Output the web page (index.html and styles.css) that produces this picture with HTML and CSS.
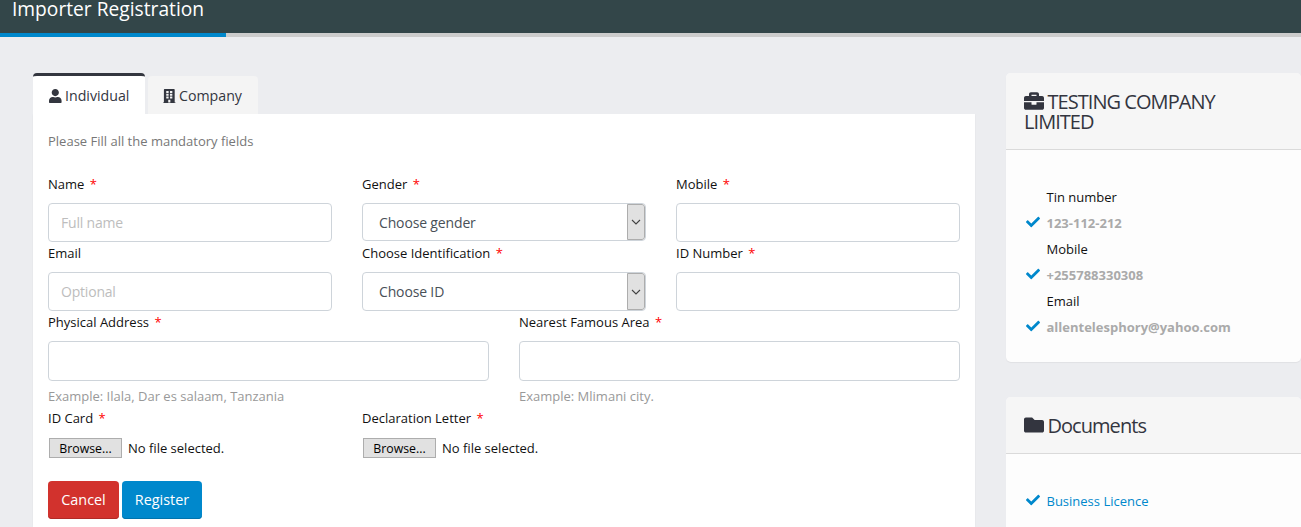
FILE: index.html
```html
<!DOCTYPE html>
<html lang="en">
<head>
<meta charset="utf-8">
<title>Importer Registration</title>
<link rel="stylesheet" href="styles.css">
</head>
<body>
<svg class="defs" width="0" height="0">
  <symbol id="check" viewBox="0 0 512 512"><path d="M173.898 439.404l-166.4-166.4c-9.997-9.997-9.997-26.206 0-36.204l36.203-36.204c9.997-9.998 26.207-9.998 36.204 0L192 312.69 432.095 72.596c9.997-9.997 26.207-9.997 36.204 0l36.203 36.204c9.997 9.997 9.997 26.206 0 36.204l-294.4 294.401c-9.998 9.997-26.207 9.997-36.204-.001z"/></symbol>
  <symbol id="chevron" viewBox="0 0 10 6"><path d="M1 1l4 4 4-4" fill="none" stroke="#444" stroke-width="1.1"/></symbol>
</svg>
<header class="topbar"><h1 class="title">Importer Registration</h1></header>
<div class="progress"><div class="progress-fill"></div></div>
<div class="layout">
  <main class="main">
    <nav class="tabs">
      <a class="tab active"><svg class="tab-icon" viewBox="0 0 448 512"><path d="M224 256c70.7 0 128-57.3 128-128S294.7 0 224 0 96 57.3 96 128s57.3 128 128 128zm89.6 32h-16.7c-22.2 10.2-46.9 16-72.9 16s-50.6-5.8-72.9-16h-16.7C60.2 288 0 348.2 0 422.4V464c0 26.5 21.5 48 48 48h352c26.5 0 48-21.5 48-48v-41.6c0-74.2-60.2-134.4-134.4-134.4z"/></svg><span>Individual</span></a>
      <a class="tab"><svg class="tab-icon" viewBox="0 0 448 512"><path fill-rule="evenodd" d="M436 480h-20V24c0-13.255-10.745-24-24-24H56C42.745 0 32 10.745 32 24v456H12c-6.627 0-12 5.373-12 12v20h448v-20c0-6.627-5.373-12-12-12zM116 70h84v76h-84zM248 70h84v76h-84zM116 172h84v70h-84zM248 172h84v70h-84zM116 268h84v70h-84zM248 268h84v70h-84zM186 384h76v96h-76z"/></svg><span>Company</span></a>
    </nav>
    <form class="panel">
      <p class="intro">Please Fill all the mandatory fields</p>
      <div class="row thirds">
        <div class="field"><label class="label">Name <i class="req">*</i></label><input class="input" placeholder="Full name"></div>
        <div class="field"><label class="label">Gender <i class="req">*</i></label><div class="select short"><span class="value">Choose gender</span><span class="arrow"><svg class="chev"><use href="#chevron"/></svg></span></div></div>
        <div class="field"><label class="label">Mobile <i class="req">*</i></label><input class="input"></div>
      </div>
      <div class="row thirds">
        <div class="field"><label class="label">Email</label><input class="input" placeholder="Optional"></div>
        <div class="field"><label class="label">Choose Identification <i class="req">*</i></label><div class="select"><span class="value">Choose ID</span><span class="arrow"><svg class="chev"><use href="#chevron"/></svg></span></div></div>
        <div class="field"><label class="label">ID Number <i class="req">*</i></label><input class="input"></div>
      </div>
      <div class="row halves">
        <div class="field"><label class="label">Physical Address <i class="req">*</i></label><input class="input tall"><span class="help">Example: Ilala, Dar es salaam, Tanzania</span></div>
        <div class="field"><label class="label">Nearest Famous Area <i class="req">*</i></label><input class="input tall"><span class="help">Example: Mlimani city.</span></div>
      </div>
      <div class="row thirds files">
        <div class="field"><label class="label">ID Card <i class="req">*</i></label><div class="file"><span class="browse">Browse...</span><span>No file selected.</span></div></div>
        <div class="field"><label class="label">Declaration Letter <i class="req">*</i></label><div class="file"><span class="browse">Browse...</span><span>No file selected.</span></div></div>
      </div>
      <div class="actions"><button type="button" class="btn cancel">Cancel</button><button type="button" class="btn register">Register</button></div>
    </form>
  </main>
  <aside class="side">
    <section class="card company">
      <h2 class="card-head"><svg class="head-icon" viewBox="0 0 512 512"><path d="M320 336c0 8.84-7.16 16-16 16h-96c-8.84 0-16-7.16-16-16v-48H0v144c0 25.6 22.4 48 48 48h416c25.6 0 48-22.4 48-48V288H320v48zm144-208h-80V80c0-25.6-22.4-48-48-48H176c-25.6 0-48 22.4-48 48v48H48c-25.6 0-48 22.4-48 48v80h512v-80c0-25.6-22.4-48-48-48zm-144 0H192V96h128v32z"/></svg> TESTING COMPANY LIMITED</h2>
      <ul class="list">
        <li class="item">Tin number</li>
        <li class="item strong"><svg class="tick"><use href="#check"/></svg>123-112-212</li>
        <li class="item">Mobile</li>
        <li class="item strong"><svg class="tick"><use href="#check"/></svg>+255788330308</li>
        <li class="item">Email</li>
        <li class="item strong"><svg class="tick"><use href="#check"/></svg>allentelesphory@yahoo.com</li>
      </ul>
    </section>
    <section class="card documents">
      <h2 class="card-head"><svg class="head-icon" viewBox="0 0 512 512"><path d="M464 128H272l-64-64H48C21.49 64 0 85.49 0 112v288c0 26.51 21.49 48 48 48h416c26.51 0 48-21.49 48-48V176c0-26.51-21.49-48-48-48z"/></svg> Documents</h2>
      <ul class="list docs">
        <li class="item link"><svg class="tick"><use href="#check"/></svg>Business Licence</li>
      </ul>
    </section>
  </aside>
</div>
</body>
</html>
```
FILE: styles.css
```css
* { box-sizing: border-box; }
body { margin: 0; background: #ecedf0; color: #212529; font: 13px/20px "Open Sans", sans-serif; }
.defs { position: absolute; }
.topbar { height: 33px; padding-left: 12px; background: #334649; }
.title { margin: 0; font-size: 19.2px; line-height: 17px; font-weight: 400; color: #fff; }
.progress { height: 4px; background: #ccc; }
.progress-fill { width: 226px; height: 4px; background: #0088cc; }
.layout { display: flex; gap: 31px; height: 490px; padding: 36px 0 0 33px; }
.main { width: 942px; }
.side { flex: 1; }

.tabs { display: flex; align-items: flex-end; gap: 3px; height: 41px; }
.tab { display: flex; align-items: center; gap: 3.4px; width: 110px; height: 38px; padding: 2px 0 0 15px; background: #f4f4f4; border-radius: 4px 4px 0 0; color: #33363f; font-size: 14.2px; }
.tab.active { width: 112px; height: 41px; padding-left: 16px; border-top: 3px solid #33363f; background: #fff; }
.tab-icon { width: 12.6px; height: 14.4px; fill: #33363f; }

.panel { height: 413px; padding: 17px 15px 0; background: #fff; box-shadow: 0 0 2px rgba(0,0,0,.05); clip-path: inset(0 -3px 0 -3px); }
.intro { margin: 0 0 23px; color: #777; }
.row { display: grid; column-gap: 30px; color: #111; }
.thirds { grid-template-columns: repeat(3, 1fr); height: 69px; }
.halves { grid-template-columns: 1fr 1fr; height: 96px; }
.field { display: flex; flex-direction: column; }
.label { flex: none; height: 29px; }
.req { margin-left: 2px; color: #f00; font-style: normal; }
.input { width: 100%; height: 39px; padding: 0 12px; border: 1px solid #ced4da; border-radius: 4px; background: #fff; font: 14px "Open Sans", sans-serif; letter-spacing: -.2px; }
.input::placeholder { color: #bdbdbd; opacity: 1; }
.input.tall { height: 40px; }
.select { display: flex; height: 39px; padding-left: 16px; border: 1px solid #ced4da; border-radius: 4px; overflow: hidden; }
.select.short { height: 38px; }
.value { flex: 1; color: #495057; font-size: 14px; line-height: 38px; letter-spacing: -.15px; }
.arrow { display: flex; align-items: center; justify-content: center; width: 18px; border: 1px solid #adadad; border-radius: 0 3px 3px 0; background: #e1e1e1; }
.chev { width: 10px; height: 6px; }
.help { margin-top: 5px; color: #999; }
.files { height: 73px; }
.file { display: flex; gap: 6px; padding: 1px 0 0 1px; }
.browse { width: 73px; height: 20px; border: 1px solid #adadad; background: #e1e1e1; color: #000; font-size: 12.3px; line-height: 19px; text-align: center; }
.actions { display: flex; gap: 3px; }
.btn { height: 38px; padding: 0 0 2px; border: 0; border-radius: 4px; color: #fff; font: 14.4px "Open Sans", sans-serif; }
.cancel { width: 71px; background: #d2322d; box-shadow: inset 0 -1px #b12a26; }
.register { width: 80px; background: #0088cc; box-shadow: inset 0 -1px #0073ad; }

.card { border-radius: 5px; background: #fdfdfd; box-shadow: 0 1px 1px rgba(0,0,0,.05); overflow: hidden; }
.company { height: 289px; margin-bottom: 35px; }
.documents { border-radius: 5px 5px 0 0; box-shadow: none; }
.card-head { margin: 0; padding: 18px 60px 17px 18px; border-bottom: 1px solid #dadada; background: #f6f6f6; color: #33353f; font-size: 20px; line-height: 20px; font-weight: 400; letter-spacing: -.95px; }
.head-icon { width: 20px; height: 20px; margin-right: -.8px; vertical-align: -2px; fill: #33353f; }
.list { margin: 0; padding: 34px 0 0 40.5px; list-style: none; }
.docs { height: 73px; }
.item { position: relative; height: 26px; line-height: 26px; color: #111; }
.strong { color: #aaa; font-weight: 700; }
.link { color: #0088cc; }
.tick { position: absolute; left: -20.5px; top: 5px; width: 14px; height: 14px; fill: #0088cc; }
```
